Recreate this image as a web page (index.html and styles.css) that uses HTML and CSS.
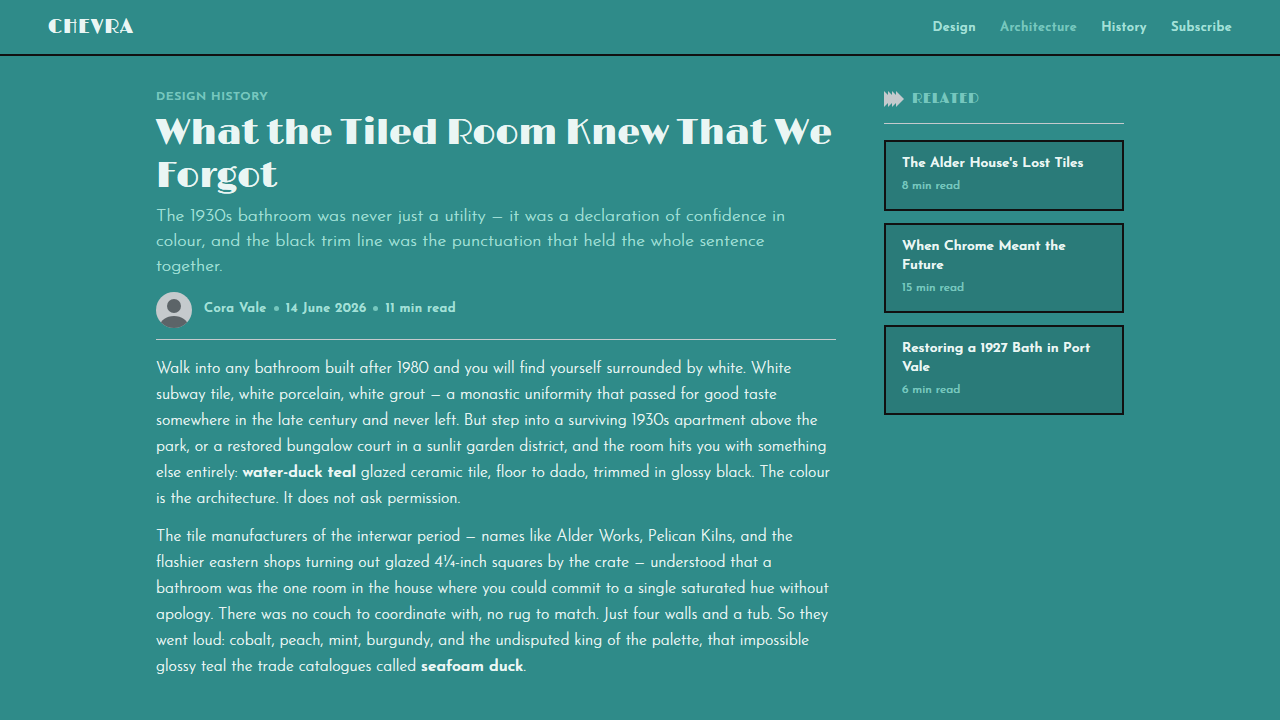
FILE: index.html
```html
<!DOCTYPE html>
<html lang="en">

<head>
    <meta charset="UTF-8">
    <meta name="viewport" content="width=device-width, initial-scale=1.0">
    <title>Chevra</title>
    <link rel="stylesheet" href="styles.css">
</head>

<body>
    <header class="header">
        <a class="header__logo" href="#">CHEVRA</a>
        <nav class="header__nav">
            <a href="#">Design</a>
            <a class="active" href="#">Architecture</a>
            <a href="#">History</a>
            <a href="#">Subscribe</a>
        </nav>
    </header>

    <div class="page">
        <main class="article">
            <p class="article__kicker">DESIGN HISTORY</p>
            <h1 class="article__title">What the Tiled Room Knew That We Forgot</h1>
            <p class="article__deck">The 1930s bathroom was never just a utility — it was a declaration of confidence in colour, and the black trim line was the punctuation that held the whole sentence together.</p>

            <div class="byline">
                <svg class="byline__avatar" viewBox="0 0 36 36" aria-hidden="true">
                    <clipPath id="avatar"><circle cx="18" cy="18" r="18"/></clipPath>
                    <g clip-path="url(#avatar)">
                        <rect width="36" height="36" fill="#c5cacd"/>
                        <circle cx="18" cy="14" r="7" fill="#5c6468"/>
                        <ellipse cx="18" cy="34" rx="14" ry="10" fill="#5c6468"/>
                    </g>
                </svg>
                <div class="byline__meta">
                    <span>Cora Vale</span>
                    <span class="byline__dot"></span>
                    <span>14 June 2026</span>
                    <span class="byline__dot"></span>
                    <span>11 min read</span>
                </div>
            </div>

            <div class="article__body">
                <p>Walk into any bathroom built after 1980 and you will find yourself surrounded by white. White subway tile, white porcelain, white grout — a monastic uniformity that passed for good taste somewhere in the late century and never left. But step into a surviving 1930s apartment above the park, or a restored bungalow court in a sunlit garden district, and the room hits you with something else entirely: <strong>water-duck teal</strong> glazed ceramic tile, floor to dado, trimmed in glossy black. The colour is the architecture. It does not ask permission.</p>
                <p>The tile manufacturers of the interwar period — names like Alder Works, Pelican Kilns, and the flashier eastern shops turning out glazed 4¼-inch squares by the crate — understood that a bathroom was the one room in the house where you could commit to a single saturated hue without apology. There was no couch to coordinate with, no rug to match. Just four walls and a tub. So they went loud: cobalt, peach, mint, burgundy, and the undisputed king of the palette, that impossible glossy teal the trade catalogues called <strong>seafoam duck</strong>.</p>
            </div>
        </main>

        <aside class="related">
            <h2 class="related__heading">
                <svg class="related__icon" viewBox="0 0 20 16" aria-hidden="true">
                    <path d="M0 0L4 4V0L8 4V0L12 4V0L20 8L12 16V12L8 16V12L4 16V12L0 16Z" fill="#c5cacd"/>
                </svg>
                RELATED
            </h2>
            <a class="card" href="#">
                <span class="card__title">The Alder House's Lost Tiles</span>
                <span class="card__meta">8 min read</span>
            </a>
            <a class="card" href="#">
                <span class="card__title">When Chrome Meant the Future</span>
                <span class="card__meta">15 min read</span>
            </a>
            <a class="card" href="#">
                <span class="card__title">Restoring a 1927 Bath in Port Vale</span>
                <span class="card__meta">6 min read</span>
            </a>
        </aside>
    </div>
</body>

</html>
```
FILE: styles.css
```css
* {
    box-sizing: border-box;
}

body {
    margin: 0;
    background-color: #2f8b89;
    color: #eaf6f4;
    font-family: "Josefin Sans", Lato, sans-serif;
    /* firms up the light strokes on the teal */
    text-shadow: 0 0 0 currentColor;
}

h1,
h2,
p {
    margin: 0;
}

a {
    color: inherit;
    text-decoration: none;
}

.header {
    display: flex;
    justify-content: space-between;
    align-items: center;
    padding: 15px 48px;
    border-bottom: 2px solid #111;
}

.header__logo {
    font: 400 20px/24px Limelight, Lato, sans-serif;
    letter-spacing: 0.05em;
}

.header__nav {
    display: flex;
    gap: 24px;
    padding-top: 2px;
    font-size: 13px;
    line-height: 22px;
    font-weight: 600;
    letter-spacing: 0.03em;
    color: #a3e0d8;
}

.header__nav .active {
    color: #76c7be;
}

.page {
    display: grid;
    grid-template-columns: minmax(0, 680px) 240px;
    justify-content: center;
    align-items: start;
    gap: 48px;
    padding: 32px 48px;
}

.article__kicker {
    padding-top: 1px;
    font-size: 12px;
    line-height: 16px;
    font-weight: 600;
    letter-spacing: 0.05em;
    color: #76c7be;
}

.article__title {
    margin-top: 7px;
    font: 400 36px/43px Limelight, Lato, sans-serif;
}

.article__deck {
    margin-top: 7px;
    font-size: 18px;
    line-height: 25px;
    font-weight: 300;
    color: #a3e0d8;
}

.byline {
    display: flex;
    align-items: center;
    gap: 12px;
    margin-top: 12px;
    padding-bottom: 11px;
    border-bottom: 1px solid #c5cacd;
}

.byline__avatar {
    width: 36px;
    height: 36px;
}

.byline__meta {
    display: flex;
    align-items: center;
    gap: 7px;
    padding-bottom: 2px;
    font-size: 13px;
    line-height: 20px;
    font-weight: 600;
    letter-spacing: 0.03em;
    color: #a3e0d8;
}

.byline__dot {
    width: 5px;
    height: 5px;
    margin-bottom: 2px;
    border-radius: 50%;
    background-color: #76c7be;
}

.article__body {
    display: flex;
    flex-direction: column;
    gap: 12px;
    margin-top: 16px;
    font-size: 16px;
    line-height: 26px;
    font-weight: 300;
}

.article__body strong {
    font-weight: 600;
}

.related {
    display: flex;
    flex-direction: column;
    gap: 12px;
}

.related__heading {
    display: flex;
    align-items: center;
    gap: 8px;
    margin-bottom: 4px;
    padding: 2px 0 15px;
    border-bottom: 1px solid #c5cacd;
    font: 400 14px/18px Limelight, Lato, sans-serif;
    letter-spacing: 0.05em;
    color: #76c7be;
}

.related__icon {
    width: 20px;
    height: 16px;
}

.card {
    display: flex;
    flex-direction: column;
    gap: 5px;
    padding: 12px 16px 15px;
    border: 2px solid #111;
    background-color: #2a7b79;
}

.card__title {
    font-size: 14px;
    line-height: 19px;
    font-weight: 600;
}

.card__meta {
    font-size: 12px;
    line-height: 16px;
    font-weight: 400;
    color: #76c7be;
}
```
